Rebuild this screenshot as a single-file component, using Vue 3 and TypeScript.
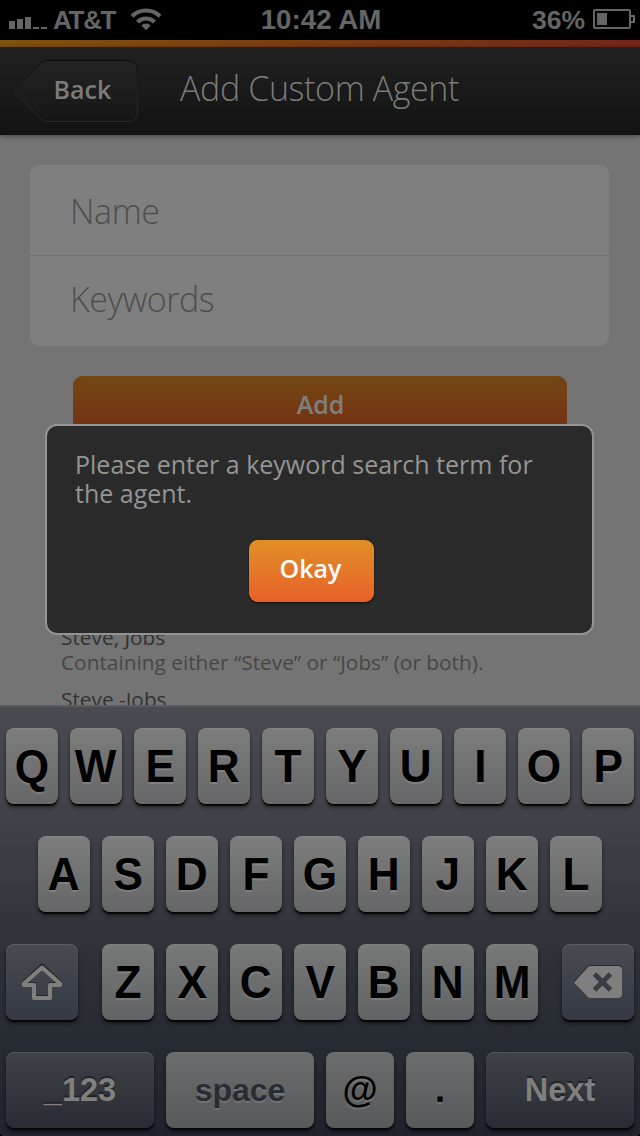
<script setup lang="ts">
interface Key {
  label: string
  kind: 'letter' | 'shift' | 'delete' | 'dark' | 'space' | 'symbol'
}

const letters = (row: string): Key[] => row.split('').map((label) => ({ label, kind: 'letter' }))

const rows: { name: string; keys: Key[] }[] = [
  { name: 'first', keys: letters('QWERTYUIOP') },
  { name: 'second', keys: letters('ASDFGHJKL') },
  {
    name: 'third',
    keys: [{ label: 'shift', kind: 'shift' }, ...letters('ZXCVBNM'), { label: 'delete', kind: 'delete' }],
  },
  {
    name: 'fourth',
    keys: [
      { label: '_123', kind: 'dark' },
      { label: 'space', kind: 'space' },
      { label: '@', kind: 'symbol' },
      { label: '.', kind: 'symbol' },
      { label: 'Next', kind: 'dark' },
    ],
  },
]

const fields: string[] = ['Name', 'Keywords']
</script>

<template>
  <div class="screen">
    <div class="status">
      <div class="status-left">
        <svg class="signal" width="38" height="14" viewBox="0 0 38 14">
          <path d="M0 6h6v8H0zM8 4h6v10H8zM16 2h6v12h-6zM24 12h6v2h-6zM32 12h6v2h-6z" fill="#656565" />
        </svg>
        <span class="carrier">AT&amp;T</span>
        <svg class="wifi" width="32" height="24" viewBox="0 0 32 24">
          <g fill="none" stroke="#656565" stroke-width="4">
            <path d="M2 9.2a20 20 0 0 1 28 0" />
            <path d="M7.5 15a12 12 0 0 1 17 0" />
          </g>
          <path d="M11.3 18.4a6.7 6.7 0 0 1 9.400 0L16 23.300z" fill="#656565" />
        </svg>
      </div>
      <span class="clock">10:42 AM</span>
      <div class="status-right">
        <span class="percent">36%</span>
        <svg class="battery" width="42" height="20" viewBox="0 0 42 20">
          <rect x="1" y="1" width="36" height="18" rx="1" fill="none" stroke="#656565" stroke-width="2" />
          <path d="M38 7h3v6h-3" fill="none" stroke="#656565" stroke-width="2" />
          <rect x="4" y="4" width="10" height="12" fill="#656565" />
        </svg>
      </div>
    </div>
    <div class="stripe"></div>
    <header class="header">
      <div class="back">
        <svg class="back-shape" width="125" height="63" viewBox="0 0 125 63">
          <defs>
            <linearGradient id="backFill" x1="0" y1="0" x2="0" y2="1">
              <stop offset="0" stop-color="#232323" />
              <stop offset="1" stop-color="#161616" />
            </linearGradient>
            <linearGradient id="backEdge" x1="0" y1="0" x2="0" y2="1">
              <stop offset="0" stop-color="#0b0b0b" />
              <stop offset=".3" stop-color="#181818" />
              <stop offset=".6" stop-color="#242424" />
              <stop offset="1" stop-color="#292929" />
            </linearGradient>
          </defs>
          <path
            d="M34 .5H114.500Q124.500 1 124.500 11V51Q124.500 61.500 114.500 61.500H34Q30 61.500 26.500 58L.5 31.500 26.500 4Q30 .5 34 .5Z"
            fill="url(#backFill)"
            stroke="url(#backEdge)"
          />
        </svg>
        <span class="back-label">Back</span>
      </div>
      <h1 class="title">Add Custom Agent</h1>
    </header>
    <main class="content">
      <div class="form">
        <div v-for="field in fields" :key="field" class="field">{{ field }}</div>
      </div>
      <div class="add">Add</div>
      <dl class="help">
        <dt>Steve, Jobs</dt>
        <dd>Containing either “Steve” or “Jobs” (or both).</dd>
        <dt>Steve -Jobs</dt>
      </dl>
    </main>
    <div class="keyboard">
      <div v-for="row in rows" :key="row.name" class="row" :class="row.name">
        <div v-for="key in row.keys" :key="key.label" class="key" :class="key.kind">
          <svg v-if="key.kind === 'shift'" width="44" height="40" viewBox="0 0 44 40">
            <g fill="none" stroke-width="4" stroke-linejoin="round">
              <path d="M22 3.500 4 20.500V22H14V35H30V22H40V20.500Z" stroke="#24272c" />
              <path d="M22 5.500 4 21.500V23H14V36H30V23H40V21.500Z" stroke="#7f7f7f" />
            </g>
          </svg>
          <svg v-else-if="key.kind === 'delete'" width="50" height="36" viewBox="0 0 50 36">
            <path d="M1 17 15 2Q16 1 18 1H45Q49 1 49 5V29Q49 32 45 32H18Q16 32 15 31Z" fill="#26292e" />
            <path d="M1 18.500 15 3Q16 2 18 2H45Q49 2 49 6V30Q49 34 45 34H18Q16 34 15 33Z" fill="#7f7f7f" />
            <path d="m21.500 10 16 16m0-16-16 16" stroke="#383c43" stroke-width="5" />
          </svg>
          <span v-else>{{ key.label }}</span>
        </div>
      </div>
    </div>
    <div class="dialog">
      <p class="message">Please enter a keyword search term for the agent.</p>
      <div class="okay">Okay</div>
    </div>
  </div>
</template>

<style>
body {
  margin: 0;
  background: #000;
}
</style>

<style scoped>
.screen {
  position: relative;
  display: flex;
  flex-direction: column;
  width: 640px;
  height: 1136px;
  overflow: hidden;
  background: #747474;
  font-family: 'Open Sans', 'Noto Sans', sans-serif;
}
.status {
  display: grid;
  grid-template-columns: 1fr auto 1fr;
  height: 40px;
  box-sizing: border-box;
  padding: 0 5px 0 9px;
  background: #000;
  color: #656565;
  font: bold 26px/40px 'Liberation Sans', Arial, sans-serif;
}
.status-left,
.status-right {
  display: flex;
  align-items: flex-start;
}
.status-right {
  justify-content: flex-end;
}
.signal {
  margin-top: 15px;
}
.carrier {
  margin-left: 6px;
  font-size: 26px;
  letter-spacing: -1.3px;
}
.wifi {
  margin: 7px 0 0 15px;
}
.clock {
  margin-left: -2px;
  font-size: 27.7px;
}
.percent {
  font-size: 26.5px;
}
.battery {
  margin: 9px 0 0 8px;
}
.stripe {
  height: 7px;
  background: linear-gradient(90deg, #81540f, #7b3c12 50%, #75271a);
}
.header {
  position: relative;
  z-index: 1;
  display: flex;
  align-items: flex-start;
  height: 88px;
  background: linear-gradient(#202020, #131313);
  box-shadow: 0 1px 5px rgba(0, 0, 0, 0.45);
}
.back {
  display: grid;
  width: 125px;
  margin: 13px 0 0 13px;
}
.back-shape,
.back-label {
  grid-area: 1 / 1;
}
.back-label {
  padding-left: 40.5px;
  color: #7b7b7b;
  font-size: 25px;
  font-weight: 600;
  line-height: 59px;
}
.title {
  margin: 0 0 0 42px;
  color: #7b7b7b;
  font-size: 34px;
  font-weight: 300;
  letter-spacing: -0.38px;
  line-height: 82px;
  white-space: nowrap;
}
.content {
  flex: 1;
  min-height: 0;
  overflow: hidden;
}
.form {
  margin: 30px 31px 0 30px;
  border-radius: 9px;
  background: #7f7f7f;
}
.field {
  height: 90px;
  padding-left: 40px;
  color: #4e4e4e;
  font-size: 34px;
  font-weight: 300;
  letter-spacing: -0.45px;
  line-height: 92px;
}
.field + .field {
  border-top: 1px solid #707070;
  line-height: 86px;
}
.add {
  height: 62px;
  margin: 30px 73px 0;
  border-radius: 9px;
  background: linear-gradient(#734713, #752d14);
  color: #7f7f7f;
  font-size: 25px;
  font-weight: 600;
  line-height: 57px;
  text-align: center;
  text-indent: 1px;
}
.help {
  margin: 187px 0 0 61px;
  font-size: 20.83px;
  line-height: 25px;
}
dt {
  color: #323232;
}
dd {
  margin: 0 0 12px;
  color: #474747;
}
.keyboard {
  display: flex;
  flex-direction: column;
  gap: 32px;
  height: 431px;
  box-sizing: border-box;
  padding-top: 21px;
  border-top: 2px solid #585b61;
  border-radius: 0 0 5px 5px;
  background: linear-gradient(#484b50, #3e4148 28%, #2d3037 60%, #262a31 78%, #20232c);
  box-shadow: 0 6px 0 #000;
}
.row {
  display: flex;
  justify-content: center;
  gap: 12px;
}
.key {
  display: flex;
  align-items: center;
  justify-content: center;
  width: 52px;
  height: 76px;
  border-radius: 8px;
  background: linear-gradient(#7d7d7d, #666668);
  box-shadow: 0 2px 1px #050608, 0 4px 4px rgba(0, 0, 0, 0.4), inset 0 1px 0 rgba(255, 255, 255, 0.06);
  color: #000;
  font: bold 46px/78px 'Liberation Sans', Arial, sans-serif;
  text-shadow: 0 2px 0 rgba(255, 255, 255, 0.13);
}
.letter span {
  transform: scaleX(0.96);
}
.third .letter {
  background: linear-gradient(#777979, #606264);
}
.shift,
.delete {
  width: 72px;
  background: linear-gradient(#484b50, #343943);
}
.shift {
  margin-right: 12px;
}
.delete {
  margin-left: 12px;
}
.dark {
  width: 148px;
  background: linear-gradient(#3e4145, #292c33);
  color: #7f7f7f;
  font-size: 32.5px;
  line-height: 80px;
  text-shadow: 0 -2px 0 #202328;
}
.shift,
.delete,
.dark {
  box-shadow: 0 2px 1px #050608, 0 4px 4px rgba(0, 0, 0, 0.4), inset 0 1px 1px rgba(255, 255, 255, 0.12);
}
.space,
.symbol {
  background: linear-gradient(#6b6c6d, #58595b);
}
.space {
  width: 148px;
  color: #292d33;
  font-size: 32px;
  line-height: 80px;
}
.symbol {
  width: 68px;
  font-size: 36px;
}
.dialog {
  position: absolute;
  top: 424px;
  left: 45px;
  display: flex;
  flex-direction: column;
  align-items: center;
  width: 549px;
  height: 211px;
  box-sizing: border-box;
  border: 2px solid #949494;
  border-radius: 12px;
  background: #2a2a2a;
}
.message {
  align-self: stretch;
  margin: 24px 28px 0;
  color: #949494;
  font-size: 25px;
  line-height: 29px;
}
.okay {
  width: 125px;
  height: 62px;
  margin: 32px 16px 0 0;
  border-radius: 9px;
  background: linear-gradient(#e18f27, #e8612a);
  box-shadow: 0 1px 2px #111;
  color: #fff;
  font-size: 25px;
  font-weight: 600;
  line-height: 57px;
  text-align: center;
  text-indent: -2px;
}
</style>
